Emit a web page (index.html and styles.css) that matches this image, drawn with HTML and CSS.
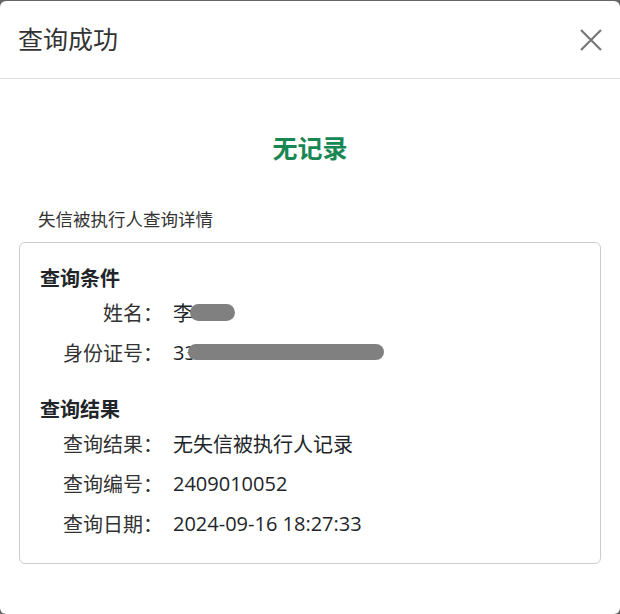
FILE: index.html
```html
<!DOCTYPE html>
<html lang="zh-CN">
<head>
  <meta charset="UTF-8">
  <meta name="viewport" content="width=device-width, initial-scale=1.0">
  <title>查询成功</title>
  <link rel="stylesheet" href="styles.css">
</head>
<body>
  <div class="modal">
    <div class="modal-header">
      <h2 class="modal-title">查询成功</h2>
      <button class="close-btn" aria-label="关闭">
        <svg width="22" height="22" viewBox="0 0 22 22">
          <path d="M1 1 L21 21 M21 1 L1 21" stroke="#777" stroke-width="2.2" fill="none"/>
        </svg>
      </button>
    </div>

    <div class="modal-body">
      <div class="status">无记录</div>
      <div class="caption">失信被执行人查询详情</div>

      <div class="card">
        <div class="section-title">查询条件</div>
        <div class="row">
          <span class="label">姓名：</span>
          <span class="value">李<span class="mask mask-name"></span></span>
        </div>
        <div class="row">
          <span class="label">身份证号：</span>
          <span class="value">33<span class="mask mask-id"></span></span>
        </div>

        <div class="section-title spaced">查询结果</div>
        <div class="row">
          <span class="label">查询结果：</span>
          <span class="value">无失信被执行人记录</span>
        </div>
        <div class="row">
          <span class="label">查询编号：</span>
          <span class="value">2409010052</span>
        </div>
        <div class="row">
          <span class="label">查询日期：</span>
          <span class="value">2024-09-16 18:27:33</span>
        </div>
      </div>
    </div>
  </div>
</body>
</html>
```

FILE: styles.css
```css
* { box-sizing: border-box; }
html, body { height: 100%; }
body {
  margin: 0;
  background: #666;
  font-family: "Open Sans", "Noto Sans CJK SC", sans-serif;
  color: #212529;
  overflow: hidden;
}
.modal {
  margin-top: 1px;
  height: 613px;
  background: #fff;
  border-radius: 6px;
}
.modal-header {
  height: 78px;
  display: flex;
  align-items: center;
  justify-content: space-between;
  padding: 0 18px 0 18px;
  border-bottom: 1px solid #dee2e6;
}
.modal-title {
  margin: 0;
  font-size: 25px;
  font-weight: 400;
  color: #333;
  line-height: 1;
}
.close-btn {
  background: none;
  border: none;
  padding: 0;
  width: 22px;
  height: 22px;
  cursor: pointer;
  display: block;
}
.close-btn svg { display: block; }

.modal-body { padding: 0 19px; }
.status {
  text-align: center;
  color: #198754;
  font-size: 25px;
  font-weight: 700;
  line-height: 30px;
  margin-top: 54px;
}
.caption {
  font-size: 17.5px;
  color: #333;
  line-height: 24px;
  margin-top: 44px;
  padding-left: 19px;
}
.card {
  margin-top: 11px;
  border: 1px solid #ccc;
  border-radius: 6px;
  padding: 23px 20px 20px 20px;
}
.section-title {
  font-size: 20px;
  font-weight: 700;
  line-height: 26px;
  color: #212529;
}
.section-title.spaced { margin-top: 25px; }
.row {
  display: flex;
  align-items: center;
  height: 40px;
  font-size: 20px;
}
.label {
  width: 123px;
  text-align: right;
  color: #333;
  flex: none;
}
.value {
  margin-left: 10px;
  color: #212529;
  display: flex;
  align-items: center;
}
.mask {
  display: inline-block;
  background: #808080;
  border-radius: 9px;
}
.mask-name { width: 45px; height: 17px; margin-left: -3px; }
.mask-id { width: 196px; height: 16px; margin-left: -8px; }
```
